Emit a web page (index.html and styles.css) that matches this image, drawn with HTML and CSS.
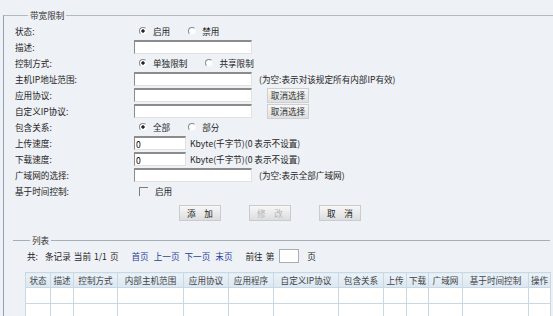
FILE: index.html
```html
<!DOCTYPE html>
<html lang="zh-CN">
<head>
    <meta charset="UTF-8">
    <title>带宽限制</title>
    <link rel="stylesheet" href="styles.css">
</head>
<body>
    <!-- 带宽限制 -->
    <fieldset class="box">
        <legend>带宽限制</legend>

        <div class="row">
            <span class="lbl">状态:</span>
            <span class="val"><i class="radio on"></i>启用<i class="radio gap"></i>禁用</span>
        </div>
        <div class="row">
            <span class="lbl">描述:</span>
            <span class="val"><input class="txt" type="text"></span>
        </div>
        <div class="row">
            <span class="lbl">控制方式:</span>
            <span class="val"><i class="radio on"></i>单独限制<i class="radio gap"></i>共享限制</span>
        </div>
        <div class="row">
            <span class="lbl">主机IP地址范围:</span>
            <span class="val"><input class="txt" type="text"><span class="tip">(为空:表示对该规定所有内部IP有效)</span></span>
        </div>
        <div class="row">
            <span class="lbl">应用协议:</span>
            <span class="val"><input class="txt" type="text"><button class="sel">取消选择</button></span>
        </div>
        <div class="row">
            <span class="lbl">自定义IP协议:</span>
            <span class="val"><input class="txt" type="text"><button class="sel">取消选择</button></span>
        </div>
        <div class="row">
            <span class="lbl">包含关系:</span>
            <span class="val"><i class="radio on"></i>全部<i class="radio gap"></i>部分</span>
        </div>
        <div class="row">
            <span class="lbl">上传速度:</span>
            <span class="val"><input class="txt short" type="text" value="0"><span class="unit">Kbyte(千字节)(0 表示不设置)</span></span>
        </div>
        <div class="row">
            <span class="lbl">下载速度:</span>
            <span class="val"><input class="txt short" type="text" value="0"><span class="unit">Kbyte(千字节)(0 表示不设置)</span></span>
        </div>
        <div class="row">
            <span class="lbl">广域网的选择:</span>
            <span class="val"><input class="txt" type="text"><span class="tip">(为空:表示全部广域网)</span></span>
        </div>
        <div class="row">
            <span class="lbl">基于时间控制:</span>
            <span class="val"><i class="check"></i>启用</span>
        </div>

        <div class="btns">
            <button class="act">添　加</button>
            <button class="act" disabled>修　改</button>
            <button class="act">取　消</button>
        </div>

        <!-- 列表 -->
        <fieldset class="list">
            <legend>列表</legend>
            <div class="pager">
                <span>共:</span>
                <span class="cnt">条记录</span>
                <span>当前</span>
                <span>1/1</span>
                <span>页</span>
                <a href="javascript:;" class="first">首页</a>
                <a href="javascript:;">上一页</a>
                <a href="javascript:;">下一页</a>
                <a href="javascript:;">末页</a>
                <span class="go">前往</span>
                <span>第</span>
                <input class="page" type="text">
                <span class="pg">页</span>
            </div>

            <table class="grid">
                <tr>
                    <th>状态</th>
                    <th>描述</th>
                    <th>控制方式</th>
                    <th>内部主机范围</th>
                    <th>应用协议</th>
                    <th>应用程序</th>
                    <th>自定义IP协议</th>
                    <th>包含关系</th>
                    <th>上传</th>
                    <th>下载</th>
                    <th>广域网</th>
                    <th>基于时间控制</th>
                    <th>操作</th>
                </tr>
                <tr>
                    <td></td><td></td><td></td><td></td><td></td><td></td><td></td><td></td><td></td><td></td><td></td><td></td><td></td>
                </tr>
                <tr>
                    <td></td><td></td><td></td><td></td><td></td><td></td><td></td><td></td><td></td><td></td><td></td><td></td><td></td>
                </tr>
            </table>
        </fieldset>
    </fieldset>
</body>
</html>
```

FILE: styles.css
```css
*{
    margin: 0;
    padding: 0;
    box-sizing: border-box;
}

body{
    background-color: #eef1f5;
    font-family: "Noto Sans CJK SC", "DejaVu Sans", sans-serif;
    font-size: 8.6px;
    color: #1e1e1e;
    overflow: hidden;
    width: 553px;
    height: 316px;
}

/* 外框 */
.box{
    margin: 7px 0 0 3px;
    width: 550px;
    height: 309px;
    min-width: 0;
    overflow: hidden;
    border: none;
    border-top: 1px solid #b2b9bf;
    border-left: 1px solid #8fa3b0;
}

.box > legend{
    margin-left: 24px;
    padding: 0 2px;
    line-height: 16px;
    color: #333;
}

.row{
    display: grid;
    grid-template-columns: 119px 1fr;
    align-items: center;
    height: 16px;
    padding-left: 11px;
}

.val{
    display: flex;
    align-items: center;
}

.radio{
    display: inline-block;
    width: 8px;
    height: 8px;
    border-radius: 50%;
    border: 1px solid;
    border-color: #8a8a8a #f6f6f6 #f6f6f6 #8a8a8a;
    background: #fff;
    margin: 0 6px 0 5px;
}

.radio.on{
    background: radial-gradient(circle, #222 1.4px, #fff 1.9px);
}

.radio.gap{
    margin-left: 18px;
}

.check{
    display: inline-block;
    width: 9px;
    height: 9px;
    border-top: 1px solid #7d7d7d;
    border-left: 1px solid #7d7d7d;
    margin: 0 7px 0 5px;
}

.txt{
    width: 118px;
    height: 14px;
    border: 1px solid;
    border-width: 2px 1px 1px 1px;
    border-color: #8c8c8c #e2e2e2 #e2e2e2 #8c8c8c;
    background: #fff;
    font: inherit;
    padding: 0 1px;
    outline: none;
}

.txt.short{
    width: 52px;
}

.tip{
    margin-left: 7px;
}

.unit{
    margin-left: 4px;
}

.sel{
    margin-left: 15px;
    width: 42px;
    height: 15px;
    border: 1px solid #cdcfd1;
    background: linear-gradient(#f6f6f6, #dedfe0);
    font: inherit;
    color: #333;
}

.btns{
    display: flex;
    gap: 28px;
    padding-left: 175px;
    margin-top: 6px;
}

.act{
    width: 42px;
    height: 16px;
    border: 1px solid #c9cbcd;
    background: linear-gradient(#f7f7f7, #dcdddf);
    font: inherit;
    color: #222;
}

.act:disabled{
    color: #b5b5b5;
}

/* 列表 */
.list{
    margin: 11px 0 0 9px;
    width: 537px;
    min-width: 0;
    border: none;
    border-top: 1px solid #a6afb6;
}

.list > legend{
    margin-left: 17px;
    padding: 0 2px;
    line-height: 16px;
    color: #333;
}

.pager{
    display: flex;
    align-items: center;
    height: 16px;
    padding-left: 14px;
    gap: 3px;
}

.pager a{
    color: #1f3f95;
    text-decoration: none;
    margin-left: 2px;
}

.pager .cnt{
    margin-left: 4px;
}

.pager .first{
    margin-left: 10px;
}

.pager .go{
    margin-left: 10px;
}

.page{
    width: 20px;
    height: 14px;
    border: 1px solid #a7aeb4;
    background: #fff;
    margin-left: 2px;
}

.pg{
    margin-left: 5px;
}

.grid{
    margin: 8px 0 0 12px;
    width: 525px;
    table-layout: fixed;
    border-collapse: collapse;
    background: #fff;
}

.grid th,
.grid td{
    border: 1px solid #c9d8e2;
    height: 16px;
}

.grid th{
    background: linear-gradient(#eaf2f9, #dbe7f2);
    font-weight: normal;
    color: #444;
    height: 15px;
}

.grid th:nth-child(1){ width: 25px; }
.grid th:nth-child(2){ width: 23px; }
.grid th:nth-child(3){ width: 44px; }
.grid th:nth-child(4){ width: 66px; }
.grid th:nth-child(5){ width: 45px; }
.grid th:nth-child(6){ width: 45px; }
.grid th:nth-child(7){ width: 65px; }
.grid th:nth-child(8){ width: 45px; }
.grid th:nth-child(9){ width: 23px; }
.grid th:nth-child(10){ width: 22px; }
.grid th:nth-child(11){ width: 34px; }
.grid th:nth-child(12){ width: 66px; }
.grid th:nth-child(13){ width: 22px; }
```
